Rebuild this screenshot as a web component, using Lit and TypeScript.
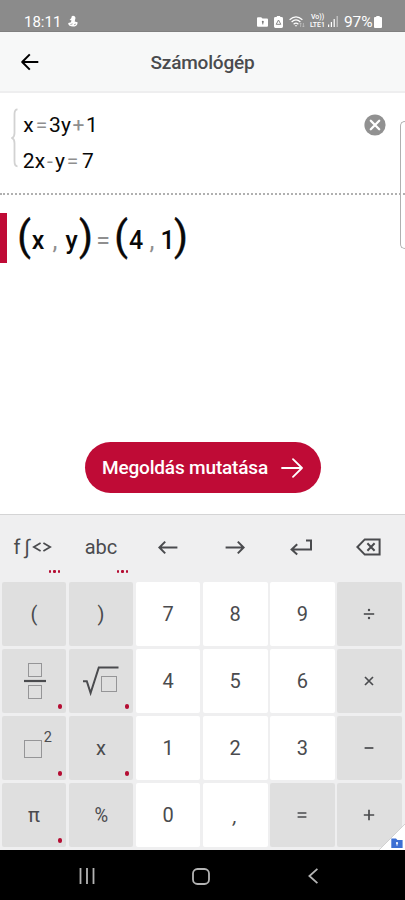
import { LitElement, html, svg, css, TemplateResult } from "lit";
import { customElement, property } from "lit/decorators.js";
import { classMap } from "lit/directives/class-map.js";

type Token = { t: string; w: number; kind?: "op" | "paren" | "comma" };

const EQ1: Token[] = [
  { t: "x", w: 11 }, { t: "=", w: 15, kind: "op" }, { t: "3", w: 12 },
  { t: "y", w: 10 }, { t: "+", w: 15, kind: "op" }, { t: "1", w: 12 },
];
const EQ2: Token[] = [
  { t: "2", w: 11.5 }, { t: "x", w: 11 }, { t: "-", w: 9, kind: "op" },
  { t: "y", w: 11 }, { t: "=", w: 14, kind: "op" }, { t: "7", w: 17 },
];
const RESULT: Token[] = [
  { t: "(", w: 14, kind: "paren" }, { t: "x", w: 14 }, { t: ",", w: 20, kind: "comma" },
  { t: "y", w: 13 }, { t: ")", w: 16, kind: "paren" }, { t: "=", w: 18, kind: "op" },
  { t: "(", w: 18, kind: "paren" }, { t: "4", w: 12 }, { t: ",", w: 20, kind: "comma" },
  { t: "1", w: 11 }, { t: ")", w: 16, kind: "paren" },
];

const fraction = svg`<svg width="24" height="40" viewBox="0 0 24 40" fill="none" stroke="#4a4b4e">
  <rect x="5.5" y="2.5" width="13" height="13" stroke-dasharray="1 1"/>
  <path d="M1 20H23" stroke-width="2.2"/>
  <rect x="5.5" y="24.5" width="13" height="13" stroke-dasharray="1 1"/></svg>`;
const root = svg`<svg width="38" height="32" viewBox="0 0 38 32" fill="none" stroke="#4a4b4e">
  <path d="M1 16.3H4.8L8.6 28L16.8 2.5H36.5" stroke-width="2"/>
  <rect x="19.5" y="11.5" width="15" height="15" stroke-dasharray="1 1"/></svg>`;
const square = svg`<svg width="20" height="20" viewBox="0 0 20 20" fill="none" stroke="#4a4b4e">
  <rect x="1.5" y="1.5" width="17" height="17" stroke-dasharray="1 1"/></svg>`;
const times = svg`<svg width="10" height="10" viewBox="0 0 10 10" fill="none" stroke="#4a4b4e" stroke-width="1.7"><path d="M1 1L9 9M9 1L1 9"/></svg>`;
const minus = svg`<svg width="10" height="10" viewBox="0 0 10 10" fill="none" stroke="#4a4b4e" stroke-width="1.7"><path d="M.6 5H9.4"/></svg>`;
const plus = svg`<svg width="12" height="12" viewBox="0 0 12 12" fill="none" stroke="#4a4b4e" stroke-width="1.7"><path d="M.8 6H11.2M6 .8V11.2"/></svg>`;
const equals = svg`<svg width="10" height="10" viewBox="0 0 10 10" fill="none" stroke="#4a4b4e" stroke-width="1.5"><path d="M.6 3H9.4M.6 7H9.4"/></svg>`;
const divide = svg`<svg width="12" height="12" viewBox="0 0 12 12" fill="#4a4b4e"><path d="M.8 5.2H11.2V6.8H.8Z"/><circle cx="6" cy="2" r="1.2"/><circle cx="6" cy="10" r="1.2"/></svg>`;

type Key = { c: string | TemplateResult; tone?: "white"; dot?: boolean };
const KEYS: Key[] = [
  { c: "(" }, { c: ")" }, { c: "7", tone: "white" }, { c: "8", tone: "white" }, { c: "9", tone: "white" }, { c: divide },
  { c: html`<span class="frac">${fraction}</span>`, dot: true }, { c: root, dot: true }, { c: "4", tone: "white" }, { c: "5", tone: "white" }, { c: "6", tone: "white" }, { c: times },
  { c: html`<span class="power">${square}<sup>2</sup></span>`, dot: true }, { c: "x", dot: true },
  { c: "1", tone: "white" }, { c: "2", tone: "white" }, { c: "3", tone: "white" }, { c: minus },
  { c: "π", dot: true }, { c: html`<span class="percent">%</span>` }, { c: "0", tone: "white" },
  { c: html`<span class="comma">,</span>`, tone: "white" }, { c: equals }, { c: plus },
];

@customElement("status-bar")
class StatusBar extends LitElement {
  static styles = css`
    :host { display: flex; align-items: flex-end; height: 32px; box-sizing: border-box; padding: 0 23px 0 24px;
      background: #8b8b8b; color: #fff; font: 15px/20px Roboto, sans-serif; border-bottom: 1px solid #808080; }
    .time, .pct { margin-bottom: -1px; }
    .time { width: 37px; }
    .left { margin: 0 auto 3px 7px; }
    svg { display: block; flex: none; }
    .folder { margin: 0 6px 4px 0; }
    .recycle { margin: 0 6px 3px 0; }
    .wifi { margin: 0 4px 3px 0; }
    .lte { display: flex; flex-direction: column; align-items: center; width: 17px; margin: 0 2px 2px 0;
      font: 500 7px/8px Roboto, sans-serif; }
    .signal { margin: 0 6px 4px 0; }
    .battery { margin: 0 0 3px 1px; }
    .pct { width: 29px; white-space: nowrap; font-size: 15.5px; letter-spacing: -0.1px; }
  `;
  render() {
    return html`
      <span class="time">18:11</span>
      <svg class="left" width="10" height="13" viewBox="0 0 10 13" fill="#fff"><path d="M5 .8C7.2 .8 7.9 2.7 7.2 4.2L6.7 6.6 9.5 7.2C10 9.8 7.7 11.6 4.9 11.6 2 11.6 -.1 10.3 .3 8L3 7.2 3.4 5.2 1.6 4.9 3.4 3C3.4 1.5 4 .8 5 .8Z"/><path d="M2.4 9.6 4.6 8.8M6 9.8 8 9" stroke="#8b8b8b" stroke-width=".7"/></svg>
      <svg class="folder" width="11" height="10" viewBox="0 0 11 10"><path d="M1 .3H4.2L5.5 1.6H10Q11 1.6 11 2.6V8.8Q11 9.8 10 9.8H1Q0 9.8 0 8.8V1.3Q0 .3 1 .3Z" fill="#fff"/><circle cx="5.8" cy="4.7" r="1" fill="#777"/><path d="M5.8 5V7.4" stroke="#777"/></svg>
      <svg class="recycle" width="9" height="12" viewBox="0 0 9 12"><path d="M2.8 1V0H6.2V1H7.6Q9 1 9 2.4V10.6Q9 12 7.6 12H1.4Q0 12 0 10.6V2.4Q0 1 1.4 1Z" fill="#fff"/><path d="M4.5 4 6.8 8.3H2.2Z" fill="none" stroke="#888" stroke-width="1" stroke-linejoin="round"/></svg>
      <svg class="wifi" width="16" height="13" viewBox="0 0 16 13" fill="none" stroke="#fff" stroke-width="1.2"><path d="M.6 4.8Q7 -1.2 13.4 4.8M2.6 7Q7 2.8 11.4 7M4.6 9.2Q7 7 9.4 9.2"/><path d="M5.7 10.2H8.3L7 11.8Z" fill="#fff" stroke="none"/><path d="M11.6 12V8M10.5 9.2 11.6 8 12.5 9.2M14.4 8V12M13.4 10.8 14.4 12 15.4 10.8" stroke="#c4c4c4" stroke-width=".7"/></svg>
      <span class="lte"><span>Vo))</span><span>LTE1</span></span>
      <svg class="signal" width="10" height="11" viewBox="0 0 10 11" fill="#fff"><path d="M0 8.5H1.2V11H0ZM2.8 6H4V11H2.8ZM5.6 3H6.8V11H5.6Z"/><path d="M8.6 0H9.8V11H8.6Z" opacity=".55"/></svg>
      <span class="pct">97%</span>
      <svg class="battery" width="8" height="12" viewBox="0 0 8 12" fill="#fff"><path d="M2.3 1V0H5.7V1H7Q8 1 8 2V11Q8 12 7 12H1Q0 12 0 11V2Q0 1 1 1Z"/></svg>
    `;
  }
}

@customElement("math-line")
class MathLine extends LitElement {
  @property({ attribute: false }) tokens: Token[] = [];
  static styles = css`
    :host { display: flex; align-items: baseline; }
    .tok { display: flex; justify-content: center; flex: none; white-space: pre; }
    .op, .comma { color: #8f8f8f; font-weight: 400; }
    .paren { font-size: 40px; line-height: 44px; font-weight: 400; }
    .paren span { position: relative; top: 1.5px; -webkit-text-stroke: 0.4px #080808; }
  `;
  render() {
    return this.tokens.map((k) => html`<span class="tok ${k.kind ?? ""}" style="width:${k.w}px"><span>${k.t}</span></span>`);
  }
}

@customElement("key-pad")
class KeyPad extends LitElement {
  static styles = css`
    :host { display: block; height: 335px; background: #efeff0; border-top: 1px solid #d4d4d5; color: #4a4b4e;
      font: 20px/24px Roboto, sans-serif; position: relative; }
    .tools, .keys { display: grid; grid-template-columns: repeat(6, 64.7px); column-gap: 2.4px; padding: 0 1.6px; }
    .tools { height: 66.6px; }
    .tool { display: flex; align-items: center; justify-content: center; position: relative; padding-bottom: 2px; }
    .tool svg { margin-right: 1px; }
    .fn { gap: 4px; margin-right: 1px; }
    .fn span:nth-child(2) { margin-right: -1px; }
    .more { position: absolute; right: 5px; bottom: 9px; display: flex; gap: 2.6px; }
    .more i { width: 2.2px; height: 2.2px; border-radius: 50%; background: #b50d33; }
    .keys { grid-template-rows: repeat(4, 64.5px); row-gap: 2.5px; }
    .key { display: flex; align-items: center; justify-content: center; position: relative; border-radius: 2px; background: #dfdfdf; }
    .white { background: #fff; }
    .dot { position: absolute; right: 4px; bottom: 4.5px; width: 4.6px; height: 4.6px; border-radius: 50%; background: #b50d33; }
    svg { display: block; }
    .frac { margin-left: 2px; }
    .power { display: flex; align-items: flex-end; padding: 0 0 8px 7px; margin-top: 4px; }
    .power sup { font-size: 14.5px; line-height: 14px; align-self: flex-start; margin: -8px 0 0 1px; }
    .power svg { margin-bottom: -6px; }
    .percent { font-size: 20px; transform: scaleX(0.93); }
    .comma { font-style: italic; margin-top: 2px; }
    .corner { position: absolute; right: 0; bottom: 0; }
  `;
  render() {
    const more = html`<span class="more"><i></i><i></i><i></i></span>`;
    const tool = (d: TemplateResult, w: number, h: number) =>
      html`<div class="tool"><svg width=${w} height=${h} viewBox="0 0 ${w} ${h}" fill="none" stroke="#4a4b4e" stroke-width="2">${d}</svg></div>`;
    return html`
      <div class="tools">
        <div class="tool fn"><span>f</span><span>∫</span>
          <svg width="20" height="12" viewBox="0 0 20 12" fill="none" stroke="#4a4b4e" stroke-width="1.7"><path d="M8.6 2 1.8 6 8.6 10M11.4 2 18.2 6 11.4 10"/></svg>${more}</div>
        <div class="tool">abc${more}</div>
        ${tool(svg`<path d="M19.4 7.5H1.6M7.2 1.6 1.4 7.5 7.2 13.4"/>`, 20, 15)}
        ${tool(svg`<path d="M.6 7.5H18.4M12.8 1.6 18.6 7.5 12.8 13.4"/>`, 20, 15)}
        ${tool(svg`<path d="M16 1.4H21V10.4H1.6M7.2 5.2 1.6 10.4 7.2 15.6"/>`, 23, 17)}
        ${tool(svg`<path d="M8.8 1.4H23.6V16.6H8.8L1.4 9ZM11.4 5.2 18.6 12.8M18.6 5.2 11.4 12.8"/>`, 25, 18)}
      </div>
      <div class="keys">
        ${KEYS.map((k) => html`<div class=${classMap({ key: true, white: k.tone === "white" })}>${k.c}${k.dot ? html`<i class="dot"></i>` : ""}</div>`)}
      </div>
      <svg class="corner" width="26" height="26" viewBox="0 0 26 26"><path d="M26 0V26H0Z" fill="#fff"/><path d="M0 26 26 0" stroke="#c9c9c9" stroke-width=".8"/><path d="M12.3 14.5H17L18.4 16H23.6V24H12.3Z" fill="#3c6fd3"/><circle cx="18" cy="19" r="1.1" fill="#fff"/><path d="M18 19V21.6" stroke="#fff"/></svg>
    `;
  }
}

@customElement("app-root")
class AppRoot extends LitElement {
  static styles = css`
    :host { display: flex; flex-direction: column; width: 405px; height: 900px; overflow: hidden; background: #fff;
      font-family: Roboto, sans-serif; color: #080808; }
    svg { display: block; flex: none; }
    header { height: 61px; box-sizing: border-box; display: grid; grid-template-columns: 60px 1fr 60px; align-items: center;
      background: #f7f8f8; border-bottom: 2px solid #eeeeef; flex: none; }
    .back { margin-left: 20px; }
    h1 { margin: 0; text-align: center; font-size: 19px; line-height: 24px; font-weight: 500; color: #4a4b4e; padding-top: 2px; letter-spacing: -0.2px; }
    .problem { height: 102px; box-sizing: border-box; display: flex; padding: 15px 19px 0 11px; border-bottom: 2px dotted #b0b0b0; flex: none; }
    .lines { margin-left: 5px; font-size: 21px; line-height: 35.5px; flex: 1; }
    .clear { margin-top: 6px; }
    .result { display: flex; align-items: center; margin-top: 18px; height: 50px; flex: none; }
    .mark { width: 6.5px; height: 50px; background: #bf0b36; margin-right: 10.5px; }
    .answer { font-size: 25px; font-weight: 500; line-height: 44px; }
    .grow { flex: 1; display: flex; align-items: flex-end; justify-content: center; padding-bottom: 21px; }
    .solve { border: 0; width: 236px; height: 51px; border-radius: 26px; background: #bf0b36; color: #fff; display: flex; align-items: center;
      padding: 0 17px 0 17.5px; gap: 12px; font: 500 19px/24px Roboto, sans-serif; white-space: nowrap; }
    .solve span { width: 167px; text-align: left; letter-spacing: -0.17px; padding-top: 1px; }
    .tab { position: absolute; left: 400px; top: 121px; width: 5px; height: 128px; box-sizing: border-box; border: 1px solid #b0b0b0;
      border-right: 0; border-radius: 5px 0 0 5px; }
    nav { height: 50px; background: #000; display: flex; align-items: center; padding: 2px 86px 0 79px; box-sizing: border-box; justify-content: space-between; flex: none; }
  `;
  render() {
    return html`
      <status-bar></status-bar>
      <header>
        <svg class="back" width="20" height="18" viewBox="0 0 20 18" fill="none" stroke="#000" stroke-width="2" stroke-linejoin="round"><path d="M18.3 9H2.4M9.8 1.4 2.2 9 9.8 16.6"/></svg>
        <h1>Számológép</h1>
      </header>
      <section class="problem">
        <svg width="7" height="60" viewBox="0 0 7 60" fill="none" stroke="#d2d2d2" stroke-width="1.8"><path d="M6.5 1.3Q3.5 1.3 3.5 6V25Q3.5 29 1 30Q3.5 31 3.5 35V53Q3.5 58.3 6.5 58.3"/></svg>
        <div class="lines"><math-line .tokens=${EQ1}></math-line><math-line .tokens=${EQ2}></math-line></div>
        <svg class="clear" width="22" height="22" viewBox="0 0 22 22"><circle cx="11" cy="11" r="10.6" fill="#919191"/><path d="M6.8 6.8 15.2 15.2M15.2 6.8 6.8 15.2" stroke="#fff" stroke-width="2.3" stroke-linecap="round"/></svg>
      </section>
      <section class="result"><div class="mark"></div><math-line class="answer" .tokens=${RESULT}></math-line></section>
      <div class="grow"><button class="solve"><span>Megoldás mutatása</span>
        <svg width="22" height="20" viewBox="0 0 22 20" fill="none" stroke="#fff" stroke-width="1.8" stroke-linecap="round" stroke-linejoin="round"><path d="M1 10H21M12 1.2 21 10 12 18.8"/></svg></button></div>
      <key-pad></key-pad>
      <nav>
        <svg width="16" height="16" viewBox="0 0 16 16" stroke="#b4b4b4" stroke-width="1.8"><path d="M1.5 0V16M8 0V16M14.5 0V16"/></svg>
        <svg width="18" height="17" viewBox="0 0 18 17" fill="none" stroke="#b4b4b4" stroke-width="1.8"><rect x="1" y="1" width="16" height="15" rx="4.5"/></svg>
        <svg width="12" height="16" viewBox="0 0 12 16" fill="none" stroke="#b4b4b4" stroke-width="1.8"><path d="M10.4 .8 2.4 8 10.4 15.2"/></svg>
      </nav>
      <div class="tab"></div>
    `;
  }
}
